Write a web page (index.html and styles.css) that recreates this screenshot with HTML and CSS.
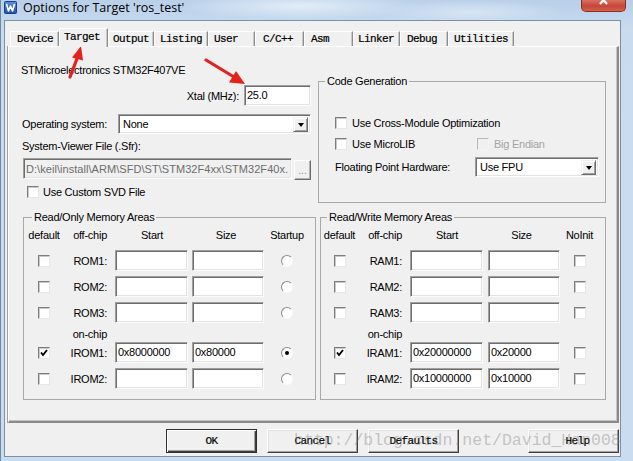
FILE: index.html
```html
<!DOCTYPE html>
<html>
<head>
<meta charset="utf-8">
<title>Options for Target</title>
<link rel="stylesheet" href="styles.css">
</head>
<body>
<div class="window">
  <div class="titlebar">
    <svg class="app-icon" width="13" height="13" viewBox="0 0 13 13">
      <defs><linearGradient id="ig" x1="0" y1="0" x2="0" y2="1"><stop offset="0" stop-color="#5f8fdc"/><stop offset="1" stop-color="#1d4fa8"/></linearGradient></defs>
      <rect x="0.5" y="0.5" width="12" height="12" rx="1" fill="url(#ig)" stroke="#1a3f85"/>
      <polyline points="2.5,3 4.5,10 6.5,5 8.5,10 10.5,3" fill="none" stroke="#fff" stroke-width="1.6" stroke-linejoin="round"/>
    </svg>
    <span class="title">Options for Target 'ros_test'</span>
    <div class="close">
      <svg width="45" height="12" viewBox="0 0 45 12"><path d="M19 -3 L26 5 M26 -3 L19 5" stroke="#fff" stroke-width="2.2"/></svg>
    </div>
  </div>

  <div class="client">
    <div class="tabs">
      <div class="tab t1">Device</div>
      <div class="tab t2 active">Target</div>
      <div class="tab t3">Output</div>
      <div class="tab t4">Listing</div>
      <div class="tab t5">User</div>
      <div class="tab t6">C/C++</div>
      <div class="tab t7">Asm</div>
      <div class="tab t8">Linker</div>
      <div class="tab t9">Debug</div>
      <div class="tab t10">Utilities</div>
    </div>

    <div class="page">
      <div class="top">
        <div class="left">
          <div class="device">STMicroelectronics STM32F407VE</div>
          <div class="xtal-row">
            <span>Xtal (MHz):</span>
            <div class="field xtal">25.0</div>
          </div>
          <div class="os-row">
            <span>Operating system:</span>
            <div class="select os"><span class="sel-text">None</span><div class="drop"><i></i></div></div>
          </div>
          <div class="sfr-label">System-Viewer File (.Sfr):</div>
          <div class="path-row">
            <div class="field path">D:\keil\install\ARM\SFD\ST\STM32F4xx\STM32F40x.</div>
            <div class="dots">...</div>
          </div>
          <div class="check svd"><span class="cb"></span><span>Use Custom SVD File</span></div>
        </div>

        <fieldset class="group codegen">
          <legend>Code Generation</legend>
          <div class="cg-body">
            <div class="check"><span class="cb"></span><span>Use Cross-Module Optimization</span></div>
            <div class="cg-row r2">
              <div class="check"><span class="cb"></span><span>Use MicroLIB</span></div>
              <div class="check disabled be"><span class="cb"></span><span>Big Endian</span></div>
            </div>
            <div class="cg-row r3">
              <span>Floating Point Hardware:</span>
              <div class="select fpu"><span class="sel-text">Use FPU</span><div class="drop"><i></i></div></div>
            </div>
          </div>
        </fieldset>
      </div>

      <div class="mem">
        <fieldset class="group rom">
          <legend>Read/Only Memory Areas</legend>
          <div class="mrow head">
            <span class="c-def">default</span><span class="c-lab">off-chip</span><span class="c-start">Start</span><span class="c-size">Size</span><span class="c-last">Startup</span>
          </div>
          <div class="mrow first">
            <span class="c-def"><span class="cb"></span></span><span class="c-lab">ROM1:</span>
            <span class="c-start"><span class="field min"></span></span><span class="c-size"><span class="field msz"></span></span>
            <span class="c-last"><span class="radio"></span></span>
          </div>
          <div class="mrow">
            <span class="c-def"><span class="cb"></span></span><span class="c-lab">ROM2:</span>
            <span class="c-start"><span class="field min"></span></span><span class="c-size"><span class="field msz"></span></span>
            <span class="c-last"><span class="radio"></span></span>
          </div>
          <div class="mrow">
            <span class="c-def"><span class="cb"></span></span><span class="c-lab">ROM3:</span>
            <span class="c-start"><span class="field min"></span></span><span class="c-size"><span class="field msz"></span></span>
            <span class="c-last"><span class="radio"></span></span>
          </div>
          <div class="mrow onchip"><span class="c-def"></span><span class="c-lab">on-chip</span></div>
          <div class="mrow after-onchip">
            <span class="c-def"><span class="cb checked"><svg width="10" height="10" viewBox="0 0 10 10"><polyline points="2,4.5 4,7 8,2" fill="none" stroke="#000" stroke-width="1.9"/></svg></span></span><span class="c-lab">IROM1:</span>
            <span class="c-start"><span class="field min">0x8000000</span></span><span class="c-size"><span class="field msz">0x80000</span></span>
            <span class="c-last"><span class="radio on"></span></span>
          </div>
          <div class="mrow">
            <span class="c-def"><span class="cb"></span></span><span class="c-lab">IROM2:</span>
            <span class="c-start"><span class="field min"></span></span><span class="c-size"><span class="field msz"></span></span>
            <span class="c-last"><span class="radio"></span></span>
          </div>
        </fieldset>

        <fieldset class="group rw">
          <legend>Read/Write Memory Areas</legend>
          <div class="mrow head">
            <span class="c-def">default</span><span class="c-lab">off-chip</span><span class="c-start">Start</span><span class="c-size">Size</span><span class="c-last">NoInit</span>
          </div>
          <div class="mrow first">
            <span class="c-def"><span class="cb"></span></span><span class="c-lab">RAM1:</span>
            <span class="c-start"><span class="field min"></span></span><span class="c-size"><span class="field msz"></span></span>
            <span class="c-last"><span class="cb"></span></span>
          </div>
          <div class="mrow">
            <span class="c-def"><span class="cb"></span></span><span class="c-lab">RAM2:</span>
            <span class="c-start"><span class="field min"></span></span><span class="c-size"><span class="field msz"></span></span>
            <span class="c-last"><span class="cb"></span></span>
          </div>
          <div class="mrow">
            <span class="c-def"><span class="cb"></span></span><span class="c-lab">RAM3:</span>
            <span class="c-start"><span class="field min"></span></span><span class="c-size"><span class="field msz"></span></span>
            <span class="c-last"><span class="cb"></span></span>
          </div>
          <div class="mrow onchip"><span class="c-def"></span><span class="c-lab">on-chip</span></div>
          <div class="mrow after-onchip">
            <span class="c-def"><span class="cb checked"><svg width="10" height="10" viewBox="0 0 10 10"><polyline points="2,4.5 4,7 8,2" fill="none" stroke="#000" stroke-width="1.9"/></svg></span></span><span class="c-lab">IRAM1:</span>
            <span class="c-start"><span class="field min">0x20000000</span></span><span class="c-size"><span class="field msz">0x20000</span></span>
            <span class="c-last"><span class="cb"></span></span>
          </div>
          <div class="mrow">
            <span class="c-def"><span class="cb"></span></span><span class="c-lab">IRAM2:</span>
            <span class="c-start"><span class="field min">0x10000000</span></span><span class="c-size"><span class="field msz">0x10000</span></span>
            <span class="c-last"><span class="cb"></span></span>
          </div>
        </fieldset>
      </div>
    </div>

    <div class="btns">
      <div class="btn default">OK</div>
      <div class="btn">Cancel</div>
      <div class="btn">Defaults</div>
      <div class="btn help">Help</div>
    </div>
  </div>

  <svg class="annot" width="633" height="461" viewBox="0 0 633 461">
    <line x1="70" y1="77" x2="78" y2="56" stroke="#e3221d" stroke-width="3.2" stroke-linecap="round"/>
    <polygon points="81,46 72,57.5 83,60.5" fill="#e3221d"/>
    <line x1="206" y1="60" x2="234" y2="77" stroke="#e3221d" stroke-width="3.2" stroke-linecap="round"/>
    <polygon points="245,84 229,82.5 236,71" fill="#e3221d"/>
  </svg>
  <div class="watermark">http://blog.csdn.net/David_Han008</div>
</div>
</body>
</html>
```

FILE: styles.css
```css
* { box-sizing: border-box; }
html, body { margin: 0; padding: 0; }
body {
  width: 633px;
  height: 461px;
  overflow: hidden;
  font-family: "Liberation Sans", Arial, sans-serif;
  font-size: 11px;
  letter-spacing: -0.25px;
  color: #000;
}

.window {
  position: relative;
  width: 633px;
  height: 461px;
  display: flex;
  flex-direction: column;
  background:
    radial-gradient(ellipse 120px 14px at 300px 6px, rgba(235,243,251,0.8), rgba(235,243,251,0) 100%),
    radial-gradient(ellipse 90px 12px at 470px 12px, rgba(225,236,248,0.7), rgba(225,236,248,0) 100%),
    linear-gradient(#b9d0e9, #c8dbef 30px, #c9dcf0);
  box-shadow: inset 1px 0 0 #6f88a4;
}

/* title bar */
.titlebar {
  height: 20px;
  display: flex;
  align-items: flex-start;
  padding-left: 4px;
}
.app-icon { margin-top: 1px; flex: none; }
.title {
  margin-left: 6px;
  font-family: "Open Sans", "Liberation Sans", sans-serif;
  font-size: 12.5px;
  letter-spacing: 0;
  line-height: 15px;
  color: #000;
}
.close {
  margin-left: auto;
  margin-right: 7px;
  width: 45px;
  height: 12px;
  border: 1px solid #8a3125;
  border-top: none;
  border-radius: 0 0 5px 5px;
  background: linear-gradient(#d8705f, #c4463a 55%, #d6604c);
  overflow: hidden;
}
.close svg { display: block; margin: -1px 0 0 -1px; }

/* client area */
.client {
  margin-left: 4px;
  width: 617px;
  height: 437px;
  background: #f0f0f0;
  border: 1px solid #7d8fa5;
  display: flex;
  flex-direction: column;
}

.tabs {
  height: 25px;
  display: flex;
  align-items: flex-end;
  padding-left: 5px;
  position: relative;
  z-index: 1;
}
.tab {
  height: 15px;
  padding-left: 5px;
  font-family: "Liberation Mono", "DejaVu Sans Mono", monospace;
  font-size: 11px;
  letter-spacing: -0.6px;
  line-height: 14px;
  background: #f0f0f0;
  border-top: 1px solid #fff;
  border-left: 1px solid #fff;
  border-right: 1px solid #8c8c8c;
  box-shadow: inset -1px 0 0 #c8c8c8;
  white-space: nowrap;
  -webkit-text-stroke: 0.2px #000;
}
.tab.active {
  height: 19px;
  margin-bottom: -1px;
  padding-left: 4px;
  padding-top: 1px;
}
.t1 { width: 49px; padding-left: 6px; }
.t2 { width: 49px; }
.t3 { width: 46px; padding-left: 4px; }
.t4 { width: 54px; }
.t5 { width: 47px; }
.t6 { width: 49px; padding-left: 7px; }
.t7 { width: 49px; padding-left: 6px; }
.t8 { width: 47px; padding-left: 4px; }
.t9 { width: 48px; padding-left: 6px; }
.t10 { width: 66px; }

.page {
  margin: 0 1px 0 3px;
  border-top: 1px solid #fff;
  border-left: 1px solid #fff;
  border-right: 2px solid #8a8a8a;
  border-bottom: 2px solid #8a8a8a;
  box-shadow: inset -1px -1px 0 #c4c4c4, -1px 0 0 #a0a0a0;
  padding: 16px 0 21px 12px;
}

.top { display: flex; align-items: flex-start; }
.left { width: 290px; display: flex; flex-direction: column; }
.device { line-height: 14px; }
.xtal-row {
  margin-top: 8px;
  height: 21px;
  display: flex;
  justify-content: flex-end;
  align-items: center;
  gap: 5px;
}
.os-row {
  margin-top: 8px;
  height: 20px;
  display: flex;
  align-items: center;
  padding-left: 1px;
}
.sfr-label { margin-top: 5px; line-height: 14px; padding-left: 1px; }
.path-row {
  margin-top: 5px;
  display: flex;
  align-items: flex-start;
  gap: 2px;
  padding-left: 2px;
}

/* sunken fields */
.field {
  display: block;
  height: 21px;
  background: #fff;
  border: 1px solid;
  border-color: #a0a0a0 #fdfdfd #fdfdfd #a0a0a0;
  box-shadow: inset 1px 1px 0 #6d6d6d, inset -1px -1px 0 #e3e3e3;
  padding: 2px 2px 0 2px;
  line-height: 14px;
  white-space: nowrap;
  overflow: hidden;
}
.xtal { width: 67px; }
.path {
  width: 269px;
  background: #f0f0f0;
  color: #6d6d6d;
  padding-top: 3px;
  letter-spacing: 0.05px;
}
.dots {
  width: 17px;
  height: 20px;
  margin-top: 2px;
  border: 1px solid;
  border-color: #fff #6d6d6d #6d6d6d #fff;
  box-shadow: inset -1px -1px 0 #b0b0b0;
  background: #f0f0f0;
  color: #8a8a8a;
  text-align: center;
  line-height: 20px;
  font-size: 10px;
  letter-spacing: 0;
}

/* select */
.select {
  position: relative;
  height: 20px;
  display: flex;
  align-items: center;
  background: #fff;
  border: 1px solid;
  border-color: #a0a0a0 #fdfdfd #fdfdfd #a0a0a0;
  box-shadow: inset 1px 1px 0 #6d6d6d, inset -1px -1px 0 #e3e3e3;
  padding: 2px 2px 2px 4px;
}
.sel-text { flex: 1; line-height: 14px; }
.drop {
  width: 15px;
  height: 15px;
  background: #f0f0f0;
  border: 1px solid;
  border-color: #f0f0f0 #6d6d6d #6d6d6d #f0f0f0;
  box-shadow: inset 1px 1px 0 #fff, inset -1px -1px 0 #a0a0a0;
  display: flex;
  align-items: center;
  justify-content: center;
}
.drop i {
  display: block;
  width: 0; height: 0;
  border-left: 3.5px solid transparent;
  border-right: 3.5px solid transparent;
  border-top: 4px solid #000;
  margin-top: 1px;
}
.os { margin-left: auto; width: 193px; }
.fpu { width: 124px; }

/* checkboxes */
.check {
  display: flex;
  align-items: center;
  gap: 5px;
  line-height: 14px;
  height: 14px;
}
.cb {
  flex: none;
  display: flex;
  align-items: center;
  justify-content: center;
  width: 12px;
  height: 12px;
  background: #fff;
  border: 1px solid;
  border-color: #7d7d7d #e6e6e6 #e6e6e6 #7d7d7d;
  box-shadow: inset 1px 1px 0 #c9c9c9;
}
.cb svg { display: block; }
.svd { margin-top: 5px; padding-left: 6px; gap: 4px; }
.check.disabled { color: #a3a3a3; }
.check.disabled .cb { background: #f0f0f0; border-color: #b8b8b8 #f4f4f4 #f4f4f4 #b8b8b8; box-shadow: none; }

/* radios */
.radio {
  display: block;
  width: 12px;
  height: 12px;
  border-radius: 50%;
  border: 1px solid;
  border-color: #8a8a8a #fafafa #fafafa #8a8a8a;
  background: #fdfdfd;
  position: relative;
}
.radio.on::after {
  content: "";
  position: absolute;
  left: 3px; top: 3px;
  width: 4px; height: 4px;
  border-radius: 50%;
  background: #000;
}

/* group boxes */
.group {
  margin: 0;
  padding: 0;
  min-width: 0;
  border: 1px solid #a9a9a9;
}
.group legend {
  margin-left: 6px;
  padding: 0 2px;
  line-height: 14px;
  font-size: 11px;
}

.codegen { margin-left: 7px; margin-top: 11px; width: 288px; }
.cg-body { padding: 28px 0 25px 16px; }
.cg-row { display: grid; grid-template-columns: 140px auto; align-items: center; }
.cg-row.r2 { margin-top: 7px; }
.cg-row.r3 { margin-top: 6px; }
.be { padding-left: 2px; }

/* memory areas */
.mem { display: flex; margin-top: 7px; gap: 4px; }
.rom { margin-left: 2px; width: 293px; padding: 0 0 10px 2px; --cols: 36px 45px 81px 76px 46px; }
.rw { width: 286px; padding: 0 0 10px 0; --cols: 37px 44px 81px 77px 39px; }

.mrow {
  display: grid;
  grid-template-columns: var(--cols);
  align-items: center;
  height: 21px;
  margin-top: 5px;
}
.mrow.head { height: 14px; margin-top: 4px; line-height: 14px; }
.mrow.first { margin-top: 8px; }
.mrow.onchip { height: 14px; margin-top: 4px; line-height: 14px; }
.mrow.after-onchip { margin-top: 1px; }

.c-def { display: flex; justify-content: center; }
.c-lab { text-align: right; white-space: nowrap; }
.c-start, .c-size { display: flex; justify-content: flex-end; }
.c-last { display: flex; justify-content: center; }
.head .c-start { justify-content: center; padding-left: 9px; }
.head .c-size { justify-content: center; }
.min { width: 73px; }
.msz { width: 72px; }

/* buttons */
.btns {
  display: flex;
  margin-top: 6px;
  padding-left: 161px;
  gap: 10px;
}
.btn {
  width: 91px;
  height: 24px;
  background: #f0f0f0;
  border: 1px solid;
  border-color: #fff #404040 #404040 #fff;
  box-shadow: inset -1px -1px 0 #a0a0a0, inset 1px 1px 0 #e3e3e3;
  font-family: "Liberation Mono", "DejaVu Sans Mono", monospace;
  font-size: 11px;
  letter-spacing: -0.6px;
  line-height: 22px;
  text-align: center;
  -webkit-text-stroke: 0.2px #000;
}
.btn.default {
  border-color: #303030;
  box-shadow: inset 1px 1px 0 #fff, inset -1px -1px 0 #404040, inset -2px -2px 0 #a0a0a0;
}
.btn.help { margin-left: 59px; padding-left: 8px; }

/* overlays */
.annot {
  position: absolute;
  left: 0;
  top: 0;
  pointer-events: none;
}
.watermark {
  position: absolute;
  left: 294px;
  top: 431px;
  font-family: "Liberation Mono", "DejaVu Sans Mono", monospace;
  font-size: 16.5px;
  letter-spacing: 0;
  line-height: 20px;
  color: rgba(120, 120, 120, 0.4);
  pointer-events: none;
  white-space: nowrap;
}
```
